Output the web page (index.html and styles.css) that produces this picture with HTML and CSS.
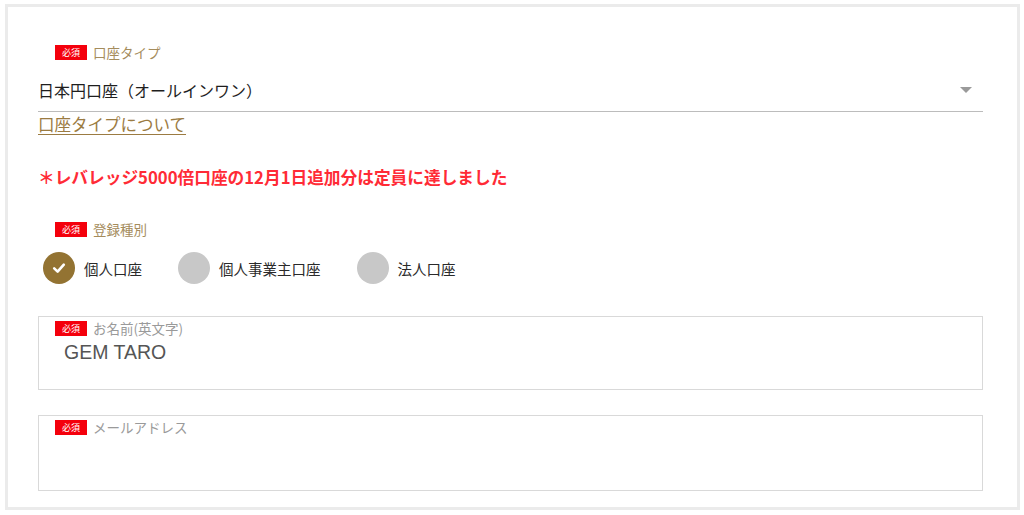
FILE: index.html
```html
<!DOCTYPE html>
<html lang="ja">
<head>
    <meta charset="UTF-8">
    <title>口座開設</title>
    <link rel="stylesheet" href="styles.css">
</head>
<body>
    <div class="form-frame">

        <div class="field-label">
            <span class="badge">必須</span>
            <span class="label-text">口座タイプ</span>
        </div>
        <div class="select-box">
            <span class="select-value">日本円口座（オールインワン）</span>
            <span class="select-arrow"></span>
        </div>
        <a class="type-link" href="#">口座タイプについて</a>

        <p class="notice">＊レバレッジ5000倍口座の12月1日追加分は定員に達しました</p>

        <div class="field-label label-kind">
            <span class="badge">必須</span>
            <span class="label-text">登録種別</span>
        </div>
        <div class="radio-row">
            <div class="radio-item">
                <span class="radio-dot checked">
                    <svg width="16" height="16" viewBox="0 0 16 16"><path d="M3.2 8.4 L6.6 11.6 L12.8 4.6" fill="none" stroke="#fff" stroke-width="2.6" stroke-linecap="round" stroke-linejoin="round"/></svg>
                </span>
                <span class="radio-text">個人口座</span>
            </div>
            <div class="radio-item">
                <span class="radio-dot"></span>
                <span class="radio-text">個人事業主口座</span>
            </div>
            <div class="radio-item">
                <span class="radio-dot"></span>
                <span class="radio-text">法人口座</span>
            </div>
        </div>

        <div class="input-box box-name">
            <div class="input-label">
                <span class="badge">必須</span>
                <span class="input-caption">お名前(英文字)</span>
            </div>
            <div class="input-value">GEM TARO</div>
        </div>

        <div class="input-box box-mail">
            <div class="input-label">
                <span class="badge">必須</span>
                <span class="input-caption">メールアドレス</span>
            </div>
        </div>

    </div>
</body>
</html>
```

FILE: styles.css
```css
body {
    margin: 0;
    background: #fff;
    font-family: "Noto Sans CJK JP", "Noto Sans", sans-serif;
    color: #222;
}

.form-frame {
    margin: 4px 4px 5px 5px;
    border: 3px solid #ebebeb;
    padding: 37px 34px 0 30px;
    box-sizing: content-box;
    display: flex;
    flex-direction: column;
    height: 463px;
}

.field-label {
    display: flex;
    align-items: center;
    height: 16px;
    margin-left: 17px;
}

.badge {
    display: inline-flex;
    align-items: center;
    justify-content: center;
    width: 32px;
    height: 15px;
    background: #f4000c;
    color: #fff;
    font-size: 9px;
    line-height: 15px;
}

.label-text {
    margin-left: 6px;
    font-size: 13.5px;
    color: #a58c5c;
}

.select-box {
    display: flex;
    justify-content: space-between;
    align-items: center;
    height: 52px;
    padding-top: 9px;
    box-sizing: border-box;
    border-bottom: 1px solid #bcbcbc;
}

.select-value {
    font-size: 16px;
    line-height: 22px;
    color: #1e1e1e;
}

.select-arrow {
    width: 0;
    height: 0;
    margin-right: 11px;
    border-left: 6px solid transparent;
    border-right: 6px solid transparent;
    border-top: 6px solid #9a9a9a;
}

.type-link {
    align-self: flex-start;
    margin-top: 1px;
    font-size: 16.5px;
    line-height: 22px;
    color: #9b7b42;
    text-decoration: underline;
    text-underline-offset: 3px;
}

.notice {
    margin: 30px 0 0;
    font-size: 16.7px;
    line-height: 24px;
    font-weight: bold;
    color: #ff2b36;
}

.label-kind {
    margin-top: 32px;
}

.radio-row {
    display: flex;
    gap: 36px;
    margin-top: 15px;
    margin-left: 5px;
}

.radio-item {
    display: flex;
    align-items: center;
}

.radio-dot {
    display: flex;
    align-items: center;
    justify-content: center;
    width: 32px;
    height: 32px;
    border-radius: 50%;
    background: #c8c8c8;
}

.radio-dot.checked {
    background: #937332;
}

.radio-text {
    margin-left: 9px;
    font-size: 14.5px;
    color: #2a2a2a;
}

.input-box {
    border: 1px solid #d9d9d9;
    box-sizing: border-box;
    padding: 3px 0 0 16px;
}

.box-name {
    margin-top: 32px;
    height: 74px;
}

.box-mail {
    margin-top: 25px;
    height: 76px;
}

.input-label {
    display: flex;
    align-items: center;
    height: 16px;
}

.input-caption {
    margin-left: 6px;
    font-size: 13.5px;
    color: #9a9a9a;
}

.input-value {
    margin: 4px 0 0 9px;
    font-family: "Liberation Sans", Arial, sans-serif;
    font-size: 19.5px;
    line-height: 24px;
    color: #555;
}
```
